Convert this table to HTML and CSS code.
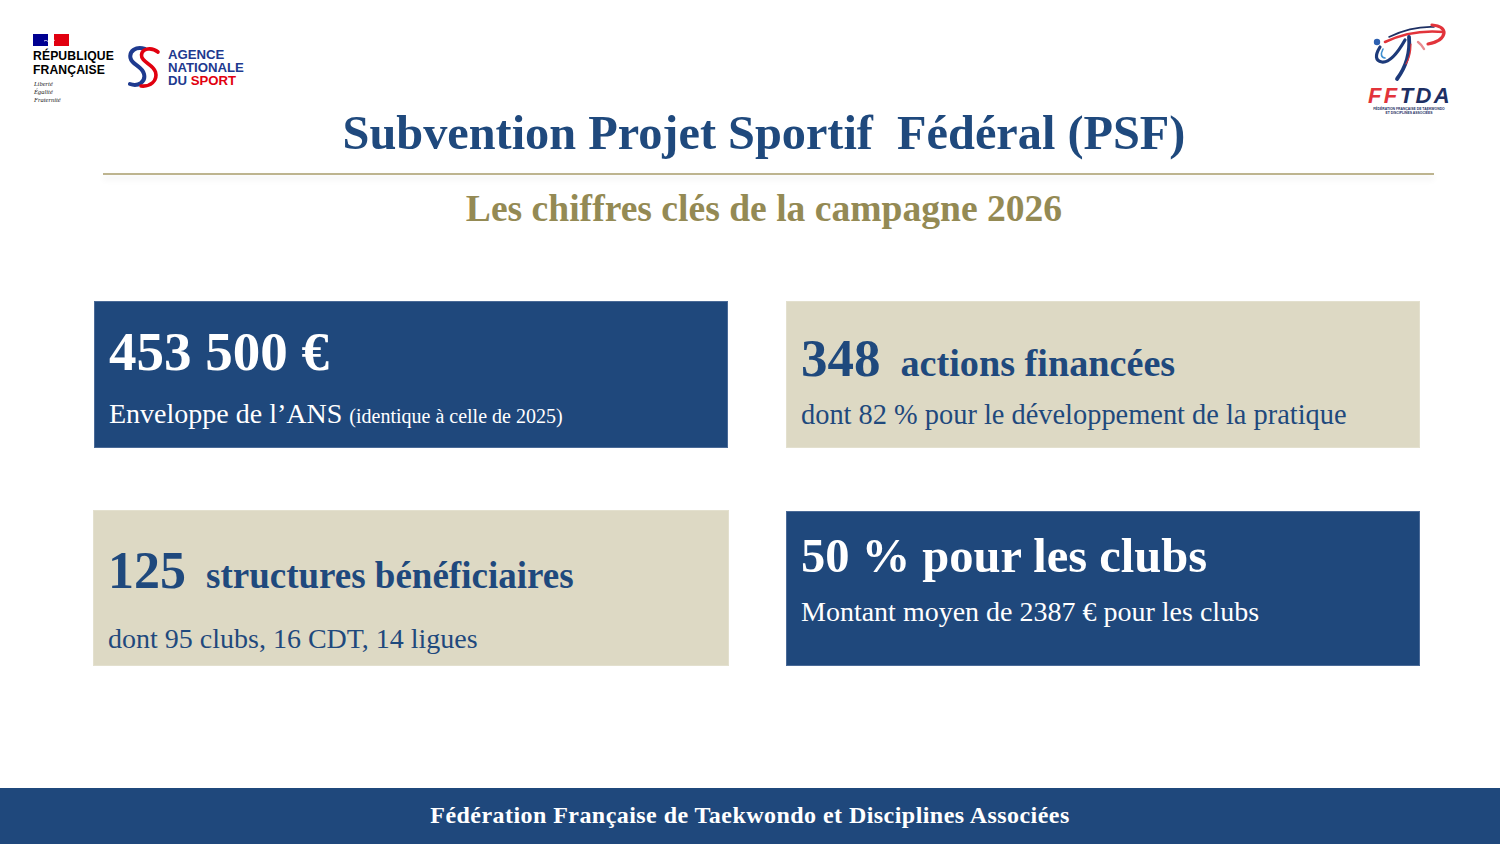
FILE: index.html
```html
<!DOCTYPE html>
<html lang="fr">
<head>
<meta charset="utf-8">
<title>Subvention PSF</title>
<link rel="stylesheet" href="styles.css">
</head>
<body>
<div class="slide">
  <header class="top">
    <div class="brands">
      <div class="rf">
        <svg class="rf-flag" width="36" height="12" viewBox="0 0 36 12">
          <rect x="0" y="0" width="15" height="12" fill="#000091"/>
          <rect x="21" y="0" width="15" height="12" fill="#e1000f"/>
          <path d="M15 0 L19 0 C20 2 21 3 20.5 5 L22 6.5 L20.5 7 C21 9 19.5 10 17 10 L16 12 L15 12 Z" fill="#ffffff"/>
          <path d="M11 7 C13 6 14.5 6.5 15.5 8" stroke="#ffffff" stroke-width="0.8" fill="none"/>
        </svg>
        <div class="rf-name">RÉPUBLIQUE<br>FRANÇAISE</div>
        <div class="rf-motto">Liberté<br>Égalité<br>Fraternité</div>
      </div>
      <div class="ans">
        <svg class="ans-s" width="36" height="44" viewBox="0 0 36 44">
          <path d="M19 4 C10 1 3 6 4.5 13 C6 20 16 21 18 29 C20 37 12 42 4 39" stroke="#1e3a8f" stroke-width="4" fill="none" stroke-linecap="round"/>
          <path d="M32 7 C26 2 16 3 15.5 10 C15 17 27 19 29.5 27 C32 36 24 42 15 41" stroke="#e1000f" stroke-width="3.6" fill="none" stroke-linecap="round"/>
        </svg>
        <div class="ans-name">AGENCE<br>NATIONALE<br>DU <span class="ans-red">SPORT</span></div>
      </div>
    </div>
    <h1 class="title">Subvention Projet Sportif&nbsp; Fédéral (PSF)</h1>
    <div class="fftda">
      <svg class="fftda-fig" width="90" height="64" viewBox="0 0 90 64">
        <path d="M21 20 Q48 7 80 10" stroke="#e2343b" stroke-width="2.6" fill="none" stroke-linecap="round"/>
        <path d="M25 15 Q48 4 70 5" stroke="#1d2f63" stroke-width="1.6" fill="none" stroke-linecap="round"/>
        <path d="M68 3 Q80 4 80 11 Q79 19 64 22" stroke="#e2343b" stroke-width="3.2" fill="none" stroke-linecap="round"/>
        <path d="M54 20 Q58 23 60 27" stroke="#e98a8f" stroke-width="2.4" fill="none" stroke-linecap="round"/>
        <circle cx="13" cy="20" r="3.2" fill="#2c5fb0"/>
        <path d="M16 25 Q8 38 18 40 Q28 41 41 18" stroke="#1d3a7a" stroke-width="3.2" fill="none" stroke-linecap="round"/>
        <path d="M19 27 Q15 35 21 36" stroke="#3d8fd1" stroke-width="1.6" fill="none" stroke-linecap="round"/>
        <path d="M45 15 Q47 38 33 57" stroke="#1d3a7a" stroke-width="3.8" fill="none" stroke-linecap="round"/>
        <path d="M47 22 Q47 34 42 42" stroke="#e2343b" stroke-width="1.2" fill="none" stroke-linecap="round"/>
      </svg>
      <div class="fftda-word"><span class="ff">FF</span>TDA</div>
      <div class="fftda-tag">FÉDÉRATION FRANÇAISE DE TAEKWONDO<br>ET DISCIPLINES ASSOCIÉES</div>
    </div>
  </header>

  <div class="rule"></div>
  <h2 class="subtitle">Les chiffres clés de la campagne 2026</h2>

  <main class="cards">
    <section class="card card-blue c1">
      <div class="big">453 500 €</div>
      <div class="sub c1-sub">Enveloppe de l’ANS <span class="small">(identique à celle de 2025)</span></div>
    </section>
    <section class="card card-tan c2">
      <div class="head"><span class="num num-53">348</span><span class="label">actions financées</span></div>
      <div class="sub c2-sub">dont 82 % pour le développement de la pratique</div>
    </section>
    <section class="card card-tan c3">
      <div class="head"><span class="num num-52">125</span><span class="label">structures bénéficiaires</span></div>
      <div class="sub c3-sub">dont 95 clubs, 16 CDT, 14 ligues</div>
    </section>
    <section class="card card-blue c4">
      <div class="big big-48">50 % pour les clubs</div>
      <div class="sub c4-sub">Montant moyen de 2387 € pour les clubs</div>
    </section>
  </main>

  <footer class="footer">Fédération Française de Taekwondo et Disciplines Associées</footer>
</div>
</body>
</html>
```

FILE: styles.css
```css
* { box-sizing: border-box; }
html, body { margin: 0; padding: 0; background: #ffffff; }
.slide {
  width: 1500px;
  height: 844px;
  display: flex;
  flex-direction: column;
  font-family: "Liberation Serif", "Times New Roman", serif;
  color: #1f497d;
  overflow: hidden;
}

/* header */
.top {
  display: grid;
  grid-template-columns: 1fr auto 1fr;
  align-items: start;
  padding: 22px 46px 0 33px;
}
.brands {
  display: flex;
  align-items: flex-start;
  gap: 12px;
  padding-top: 12px;
  justify-self: start;
}
.rf { display: flex; flex-direction: column; }
.rf-flag { display: block; margin-bottom: 4px; }
.rf-name {
  font-family: "Liberation Sans", Arial, sans-serif;
  font-weight: 700;
  font-size: 12.2px;
  line-height: 13.5px;
  color: #000000;
  letter-spacing: 0.1px;
}
.rf-motto {
  font-family: "Liberation Serif", serif;
  font-style: italic;
  font-size: 6.5px;
  line-height: 8px;
  color: #222222;
  margin-top: 3px;
  padding-left: 1px;
}
.ans { display: flex; align-items: flex-start; gap: 6px; padding-top: 11px; }
.ans-s { display: block; }
.ans-name {
  font-family: "Liberation Sans", Arial, sans-serif;
  font-weight: 700;
  font-size: 13.2px;
  line-height: 13px;
  color: #1e3a8f;
  padding-top: 3px;
}
.ans-red { color: #e1000f; }

.title {
  margin: 0;
  padding-top: 82px;
  padding-left: 41px;
  font-size: 48.3px;
  line-height: 57.6px;
  font-weight: 700;
  color: #1f497d;
  white-space: nowrap;
}

.fftda {
  justify-self: end;
  width: 90px;
  display: flex;
  flex-direction: column;
  align-items: center;
}
.fftda-fig { display: block; }
.fftda-word {
  font-family: "Liberation Sans", Arial, sans-serif;
  font-weight: 700;
  font-style: italic;
  font-size: 22px;
  line-height: 18px;
  letter-spacing: 2.4px;
  color: #1d2f63;
  margin-top: 1px;
  padding-left: 2px;
}
.ff { color: #e2343b; }
.fftda-tag {
  font-family: "Liberation Sans", Arial, sans-serif;
  font-weight: 700;
  font-size: 3.4px;
  line-height: 4px;
  color: #1d2f63;
  text-align: center;
  margin-top: 2px;
}

/* rule */
.rule {
  margin: 11px 66px 0 103px;
  height: 2px;
  background: #bdb48f;
  box-shadow: 0 4px 6px rgba(0, 0, 0, 0.10);
}
.subtitle {
  margin: 12px 0 0 0;
  padding-left: 28px;
  text-align: center;
  font-size: 37.6px;
  line-height: 44.4px;
  font-weight: 700;
  color: #948a54;
}

/* cards */
.cards {
  display: grid;
  grid-template-columns: 634px 634px;
  grid-template-rows: 147px 155px;
  column-gap: 58px;
  row-gap: 63px;
  padding-left: 94px;
  margin-top: 70px;
}
.card {
  padding-left: 14px;
  display: flex;
  flex-direction: column;
}
.card-blue {
  background: #1f487c;
  border: 1px solid #4a6a97;
  color: #ffffff;
}
.card-tan {
  background: #ddd9c4;
  border: 1px solid #e3e0ce;
  color: #1f497d;
}
.big {
  font-size: 55px;
  line-height: 55px;
  font-weight: 700;
}
.big-48 { font-size: 48.5px; line-height: 48px; }
.sub {
  font-size: 28px;
  line-height: 28px;
}
.c2-sub { font-size: 28.4px; }
.small { font-size: 20px; }
.head {
  display: flex;
  align-items: baseline;
  gap: 20px;
  font-weight: 700;
}
.num { line-height: 1; }
.num-53 { font-size: 53px; }
.num-52 { font-size: 52px; }
.label { font-size: 37px; line-height: 1; }
.c2 .label { font-size: 38.2px; }

.c1 { padding-top: 22px; }
.c1-sub { margin-top: 21px; }
.c2 { padding-top: 30px; }
.c2-sub { margin-top: 16px; }
.c3 { padding-top: 34px; margin-left: -1px; margin-right: -1px; margin-top: -1px; }
.c3-sub { margin-top: 28px; }
.c4 { padding-top: 20px; }
.c4-sub { margin-top: 18px; }

/* footer */
.footer {
  margin-top: auto;
  height: 56px;
  background: #1f487c;
  color: #ffffff;
  font-weight: 700;
  font-size: 24px;
  letter-spacing: 0.45px;
  display: flex;
  align-items: center;
  justify-content: center;
  padding-bottom: 2px;
}
```
